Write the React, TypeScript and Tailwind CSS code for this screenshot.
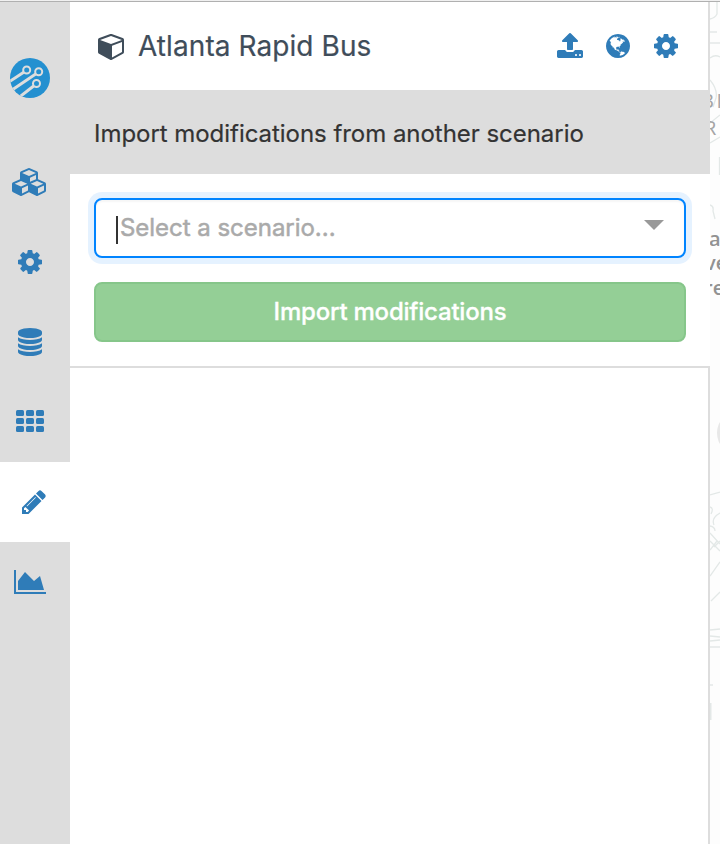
import React from "react";

const GEAR =
  "M1152 896q0-106-75-181t-181-75-181 75-75 181 75 181 181 75 181-75 75-181zm512-109v222q0 12-8 23t-20 13l-185 28q-19 54-39 91 35 50 107 138 10 12 10 25t-9 23q-27 37-99 108t-94 71q-12 0-26-9l-138-108q-44 23-91 38-16 136-29 186-7 28-36 28h-222q-14 0-24.5-8.5t-11.5-21.5l-28-184q-49-16-90-37l-141 107q-10 9-25 9-14 0-25-11-126-114-165-168-7-10-7-23 0-12 8-23 15-21 51-66.5t54-70.5q-27-50-41-99l-183-27q-13-2-21-12.5t-8-23.5v-222q0-12 8-23t19-13l186-28q14-46 39-92-40-57-107-138-10-12-10-24 0-10 9-23 26-36 98.5-107.5t94.5-71.5q13 0 26 10l138 107q44-23 91-38 16-136 29-186 7-28 36-28h222q14 0 24.5 8.5t11.5 21.5l28 184q49 16 90 37l142-107q9-9 24-9 13 0 25 10 129 119 165 170 7 8 7 22 0 12-8 23-15 21-51 66.5t-54 70.5q26 50 41 98l183 28q13 2 21 12.5t8 23.5z";
const CUBES =
  "M640 1632l384-192v-314l-384 164v342zm-64-454l404-173-404-173-404 173zm1088 454l384-192v-314l-384 164v342zm-64-454l404-173-404-173-404 173zm-448-293l384-165v-266l-384 164v267zm-64-379l441-189-441-189-441 189zm1088 518v416q0 36-19 67t-52 47l-448 224q-25 14-57 14t-57-14l-448-224q-4-2-7-4-2 2-7 4l-448 224q-25 14-57 14t-57-14l-448-224q-33-16-52-47t-19-67v-416q0-38 21.5-70t56.5-48l434-186v-400q0-38 21.5-70t56.5-48l448-192q23-10 50-10t50 10l448 192q35 16 56.5 48t21.5 70v400l434 186q36 16 57 48t21 70z";
const DATABASE =
  "M896 768q237 0 443-43t325-127v170q0 69-103 128t-280 93.5-385 34.5-385-34.5-280-93.5-103-128v-170q119 84 325 127t443 43zm0 768q237 0 443-43t325-127v170q0 69-103 128t-280 93.5-385 34.5-385-34.5-280-93.5-103-128v-170q119 84 325 127t443 43zm0-384q237 0 443-43t325-127v170q0 69-103 128t-280 93.5-385 34.5-385-34.5-280-93.5-103-128v-170q119 84 325 127t443 43zm0-1152q208 0 385 34.5t280 93.5 103 128v128q0 69-103 128t-280 93.5-385 34.5-385-34.5-280-93.5-103-128v-128q0-69 103-128t280-93.5 385-34.5z";
const PENCIL =
  "M491 1536l91-91-235-235-91 91v107h128v128h107zm523-928q0-22-22-22-10 0-17 7l-542 542q-7 7-7 17 0 22 22 22 10 0 17-7l542-542q7-7 7-17zm-54-192l416 416-832 832h-416v-416zm683 96q0 53-37 90l-166 166-416-416 166-165q36-38 90-38 53 0 91 38l235 234q37 39 37 91z";
const AREA =
  "M2048 1536v128h-2048v-1536h128v1408h1920zm-384-1024l256 896h-1664v-576l448-576 576 576z";
const CUBE =
  "M896 1629l640-349v-636l-640 233v752zm-64-865l698-254-698-254-698 254 698 254zm832-252v768q0 35-18 65t-49 47l-704 384q-28 16-61 16t-61-16l-704-384q-31-17-49-47t-18-65v-768q0-40 23-73t61-50l704-256q22-8 44-8t44 8l704 256q38 17 61 50t23 73z";
const UPLOAD =
  "M1344 1472q0-26-19-45t-45-19-45 19-19 45 19 45 45 19 45-19 19-45zm256 0q0-26-19-45t-45-19-45 19-19 45 19 45 45 19 45-19 19-45zm128-224v320q0 40-28 68t-68 28h-1472q-40 0-68-28t-28-68v-320q0-40 28-68t68-28h427q21 56 70.5 92t110.5 36h256q61 0 110.5-36t70.5-92h427q40 0 68 28t28 68zm-325-648q-17 40-59 40h-256v448q0 26-19 45t-45 19h-256q-26 0-45-19t-19-45v-448h-256q-42 0-59-40-17-39 14-69l448-448q18-19 45-19t45 19l448 448q31 30 14 69z";
const GLOBE =
  "M896 128q209 0 385.5 103t279.5 279.5 103 385.5-103 385.5-279.5 279.5-385.5 103-385.5-103-279.5-279.5-103-385.5 103-385.5 279.5-279.5 385.5-103zm274 521q-2 1-9.5 9.5t-13.5 9.5q2 0 4.5-5t5-11 3.5-7q6-7 22-15 14-6 52-12 34-8 51 11-2-2 9.5-13t14.5-12q3-2 15-4.5t15-7.5l2-22q-12 1-17.5-7t-6.5-21q0 2-6 8 0-7-4.5-8t-11.5 1-9 1q-10-3-15-7.5t-8-16.5-4-15q-2-5-9.5-11t-9.5-10q-1-2-2.5-5.5t-3-6.5-4-5.5-5.5-2.5-7 5-7.5 10-4.5 5q-3-2-6-1.5t-4.5 1-4.5 3-5 3.5q-3 2-8.5 3t-8.5 2q15-5-1-11-10-4-16-3 9-4 7.5-12t-8.5-14h5q-1-4-8.5-8.5t-17.5-8.5-13-6q-8-5-34-9.5t-33-.5q-5 6-4.5 10.5t4 14 3.5 12.5q1 6-5.5 13t-6.5 12q0 7 14 15.5t10 21.5q-3 8-16 16t-16 12q-5 8-1.5 18.5t10.5 16.5q2 2 1.5 4t-3.5 4.5-5.5 4-6.5 3.5l-3 2q-11 5-20.5-6t-13.5-26q-7-25-16-30-23-8-29 1-5-13-41-26-25-9-58-4 6-1 0-15-7-15-19-12 3-6 4-17.5t1-13.5q3-13 12-23 1-1 7-8.5t9.5-13.5.5-6q35 4 50-11 5-5 11.5-17t10.5-17q9-6 14-5.5t14.5 5.5 14.5 5q14 1 15.5-11t-7.5-20q12 1 3-17-4-7-8-9-12-4-27 5-8 4 2 8-1-1-9.5 10.5t-16.5 17.5-16-5q-1-1-5.5-13.5t-9.5-13.5q-8 0-16 15 3-8-11-15t-24-8q19-12-8-27-7-4-20.5-5t-19.5 4q-5 7-5.5 11.5t5 8 10.5 5.5 11.5 4 8.5 3q14 10 8 14-2 1-8.5 3.5t-11.5 4.5-6 4q-3 4 0 14t-2 14q-5-5-9-17.5t-7-16.5q7 9-25 6l-10-1q-4 0-16 2t-20.5 1-13.5-8q-4-8 0-20 1-4 4-2-4-3-11-9.5t-10-8.5q-46 15-94 41 6 1 12-1 5-2 13-6.5t10-5.5q34-14 42-7l5-5q14 16 20 25-7-4-30-1-20 6-22 12 7 12 5 18-4-3-11.5-10t-14.5-11-15-5q-16 0-22 1-146 80-235 222 7 7 12 8 4 1 5 9t2.5 11 11.5-3q9 8 3 19 1-1 44 27 19 17 21 21 3 11-10 18-1-2-9-9t-9-4q-3 5 .5 18.5t10.5 12.5q-7 0-9.5 16t-2.5 35.5-1 23.5l2 1q-3 12 5.5 34.5t21.5 19.5q-13 3 20 43 6 8 8 9 3 2 12 7.5t15 10 10 10.5q4 5 10 22.5t14 23.5q-2 6 9.5 20t10.5 23q-1 0-2.5 1t-2.5 1q3 7 15.5 14t15.5 13q1 3 2 10t3 11 8 2q2-20-24-62-15-25-17-29-3-5-5.5-15.5t-4.5-14.5q2 0 6 1.5t8.5 3.5 7.5 4 2 3q-3 7 2 17.5t12 18.5 17 19 12 13q6 6 14 19.5t0 13.5q9 0 20 10.5t17 19.5q5 8 8 26t5 24q2 7 8.5 13.5t12.5 9.5l16 8 13 7q5 2 18.5 10.5t21.5 11.5q10 4 16 4t14.5-2.5 13.5-3.5q15-2 29 15t21 21q36 19 55 11-2 1 .5 7.5t8 15.5 9 14.5 5.5 8.5q5 6 18 15t18 15q6-4 7-9-3 8 7 20t18 10q14-3 14-32-31 15-49-18 0-1-2.5-5.5t-4-8.5-2.5-8.5 0-7.5 5-3q9 0 10-3.5t-2-12.5-4-13q-1-8-11-20t-12-15q-5 9-16 8t-16-9q0 1-1.5 5.5t-1.5 6.5q-13 0-15-1 1-3 2.5-17.5t3.5-22.5q1-4 5.5-12t7.5-14.5 4-12.5-4.5-9.5-17.5-2.5q-19 1-26 20-1 3-3 10.5t-5 11.5-9 7q-7 3-24 2t-24-5q-13-8-22.5-29t-9.5-37q0-10 2.5-26.5t3-25-5.5-24.5q3-2 9-9.5t10-10.5q2-1 4.5-1.5t4.5 0 4-1.5 3-6q-1-1-4-3-3-3-4-3 7 3 28.5-1.5t27.5 1.5q15 11 22-2 0-1-2.5-9.5t-.5-13.5q5 27 29 9 3 3 15.5 5t17.5 5q3 2 7 5.5t5.5 4.5 5-.5 8.5-6.5q10 14 12 24 11 40 19 44 7 3 11 2t4.5-9.5 0-14-1.5-12.5l-1-8v-18l-1-8q-15-3-18.5-12t1.5-18.5 15-18.5q1-1 8-3.5t15.5-6.5 12.5-8q21-19 15-35 7 0 11-9-1 0-5-3t-7.5-5-4.5-2q9-5 2-16 5-3 7.5-11t7.5-10q9 12 21 2 8-8 1-16 5-7 20.5-10.5t18.5-9.5q7 2 8-2t1-12 3-12q4-5 15-9t13-5l17-11q3-4 0-4 18 2 31-11 10-11-6-20 3-6-3-9.5t-15-5.5q3-1 11.5-.5t10.5-1.5q15-10-7-16-17-5-43 12zm-163 877q206-36 351-189-3-3-12.5-4.5t-12.5-3.5q-18-7-24-8 1-7-2.5-13t-8-9-12.5-8-11-7q-2-2-7-6t-7-5.5-7.5-4.5-8.5-2-10 1l-3 1q-3 1-5.5 2.5t-5.5 3-4 3 0 2.5q-21-17-36-22-5-1-11-5.5t-10.5-7-10-1.5-11.5 7q-5 5-6 15t-2 13q-7-5 0-17.5t2-18.5q-3-6-10.5-4.5t-12 4.5-11.5 8.5-9 6.5-8.5 5.5-8.5 7.5q-3 4-6 12t-5 11q-2-4-11.5-6.5t-9.5-5.5q2 10 4 35t5 38q7 31-12 48-27 25-29 40-4 22 12 26 0 7-8 20.5t-7 21.5q0 6 2 16z";

function Icon({ d, units = 1792, className = "" }: { d: string; units?: number; className?: string }) {
  return (
    <svg
      width={units / 64}
      height={28}
      viewBox={`0 0 ${units} 1792`}
      fill="currentColor"
      className={`shrink-0 ${className}`}
    >
      <path d={d} />
    </svg>
  );
}

function Logo() {
  return (
    <svg width="40" height="40" viewBox="0 0 40 40" className="ml-[10px] mt-14 shrink-0">
      <defs>
        <clipPath id="disc">
          <circle cx="20" cy="20" r="20" />
        </clipPath>
      </defs>
      <circle cx="20" cy="20" r="20" fill="#2490d0" />
      <g clipPath="url(#disc)" fill="none" stroke="#dddddd" strokeWidth="2.9">
        <path d="M-1 23.8L13.7 14.2M2 32L25.7 16M9 39.5L23.6 28" />
        <circle cx="16.7" cy="12" r="3.5" strokeWidth="2" />
        <circle cx="28.7" cy="13.7" r="3.5" strokeWidth="2" />
        <circle cx="26.5" cy="25.5" r="3.5" strokeWidth="2" />
      </g>
    </svg>
  );
}

function Grid() {
  return (
    <span className="grid grid-cols-[8px_8px_8px] gap-[2px]">
      {[0, 1, 2, 3, 4, 5, 6, 7, 8].map((i) => (
        <span key={i} className="h-[6px] w-[8px] rounded-[1.5px] bg-[#2f7cb8]" />
      ))}
    </span>
  );
}

function Sidebar() {
  const cell = "flex h-20 shrink-0 items-center";
  return (
    <nav className="flex w-[70px] shrink-0 flex-col bg-[#dddddd] text-[#2f7cb8]">
      <div className="flex h-[140px] shrink-0">
        <Logo />
      </div>
      <a className={`${cell} pl-3`}><Icon d={CUBES} units={2176} /></a>
      <a className={`${cell} pl-4`}><Icon d={GEAR} /></a>
      <a className={`${cell} pl-4`}><Icon d={DATABASE} /></a>
      <a className={`${cell} pb-[2px] pl-4`}><Grid /></a>
      <a className={`${cell} bg-white pl-5`}><Icon d={PENCIL} /></a>
      <a className={`${cell} pl-[14px]`}><Icon d={AREA} units={2048} /></a>
    </nav>
  );
}

function MapEdge() {
  return (
    <svg width="10" height="842" viewBox="710 2 10 842" className="shrink-0 bg-[#fdfdfd]">
      <g fill="none" stroke="#e3e8e7" strokeWidth="1.3">
        <path d="M717 2v12q-2 4-7 5M710 32h7M710 43h10M710 58q5-4 10-1M710 80q8 10 6 18l-3 9M710 123l10-8M719.5 157v18M710 143l10-6M710 205q4 1 3 6l2 8" />
        <path d="M710 495l10-3M710 507q4 1 1 7M710 526q5 1 5 5M714 525q-3-7 6-12M710 533l10 11M710 541l10 10M710 550l7-9M710 576l10-14M714 547l6-6M711 601l9-9" />
        <path d="M710 630l10-1M710 636l10 1M710 641l10-1M710 647h10M710 685h3" />
        <path d="M710.5 703v17" strokeWidth="2" />
      </g>
      <circle cx="739" cy="433" r="22" fill="#e8e8e8" />
      <g fill="#929292" fontFamily="Open Sans, sans-serif">
        <text x="701" y="108" fontSize="20" fill="#a5a5a5" letterSpacing="2.5">BI</text>
        <text x="704" y="135" fontSize="20" fill="#a5a5a5">R</text>
        <text x="709" y="246" fontSize="20" fontWeight="600">a</text>
        <text x="705" y="270" fontSize="20" fontWeight="600">ve</text>
        <text x="704" y="295" fontSize="20" fontWeight="600">re</text>
      </g>
    </svg>
  );
}

export default function App() {
  return (
    <div className="flex h-[844px] w-[720px] flex-col overflow-hidden bg-white font-['Inter',sans-serif]">
      <div className="h-[2px] shrink-0 border-b border-[#b0b0b0] bg-[#f0f0f0]" />
      <div className="flex min-h-0 flex-1">
        <Sidebar />
        <main className="flex w-[640px] shrink-0 flex-col bg-white">
          <header className="flex h-[88px] shrink-0 items-center border-r-2 border-[#dddddd] pl-7 pr-7 text-[#3f4d5a]">
            <Icon d={CUBE} units={1664} />
            <h1 className="ml-[14px] flex-1 whitespace-nowrap text-[28px] leading-none tracking-[0.08px] [-webkit-text-stroke:0.2px]">
              Atlanta Rapid Bus
            </h1>
            <div className="flex gap-5 text-[#2f7cb8]">
              <Icon d={UPLOAD} />
              <Icon d={GLOBE} />
              <Icon d={GEAR} />
            </div>
          </header>
          <div className="flex h-[84px] shrink-0 items-center bg-[#dddddd] pt-1 pl-6 text-2xl tracking-[-0.04px] whitespace-nowrap text-[#333333] [-webkit-text-stroke:0.2px]">
            Import modifications from another scenario
          </div>
          <section className="flex h-[194px] shrink-0 flex-col gap-6 border-b-2 border-[#dddddd] px-6 pt-6">
            <div className="flex h-[60px] items-center rounded-lg border-2 border-[#0084ff] bg-white pl-5 pr-5 shadow-[0_0_0_6px_rgba(0,126,255,0.1),inset_0_2px_2px_rgba(0,0,0,0.04)]">
              <span className="mt-1 h-7 w-[2px] bg-[#333333]" />
              <span className="ml-[2px] flex-1 text-2xl tracking-[-0.03px] whitespace-nowrap text-[#aaaaaa] [-webkit-text-stroke:0.5px]">
                Select a scenario...
              </span>
              <span className="mb-[6px] border-x-[10px] border-t-[10px] border-x-transparent border-t-[#999999]" />
            </div>
            <button className="flex h-[60px] items-center justify-center rounded-lg border-2 border-[#86c68a] bg-[#94cf96] text-2xl font-medium tracking-[-0.22px] text-white [-webkit-text-stroke:0.3px]">
              Import modifications
            </button>
          </section>
          <div className="flex-1 border-r-2 border-[#dddddd]" />
        </main>
        <MapEdge />
      </div>
    </div>
  );
}
